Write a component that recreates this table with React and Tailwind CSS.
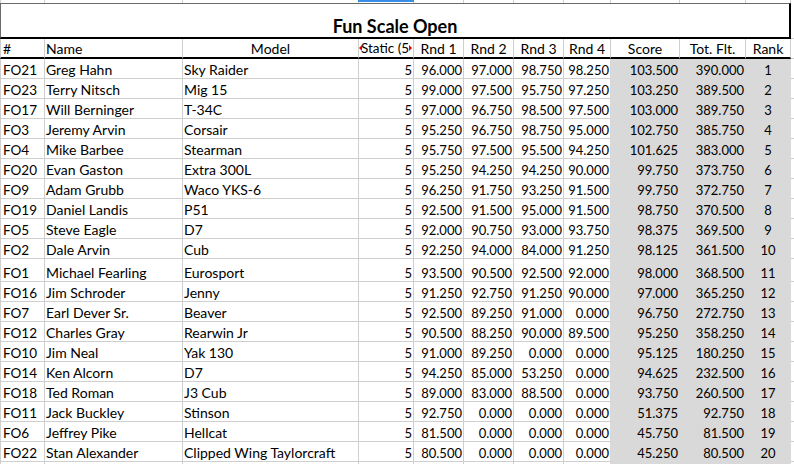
import React from "react";

const rows = [
  ["FO21", "Greg Hahn", "Sky Raider", "96.000", "97.000", "98.750", "98.250", "103.500", "390.000", "1"],
  ["FO23", "Terry Nitsch", "Mig 15", "99.000", "97.500", "95.750", "97.250", "103.250", "389.500", "2"],
  ["FO17", "Will Berninger", "T-34C", "97.000", "96.750", "98.500", "97.500", "103.000", "389.750", "3"],
  ["FO3", "Jeremy Arvin", "Corsair", "95.250", "96.750", "98.750", "95.000", "102.750", "385.750", "4"],
  ["FO4", "Mike Barbee", "Stearman", "95.750", "97.500", "95.500", "94.250", "101.625", "383.000", "5"],
  ["FO20", "Evan Gaston", "Extra 300L", "95.250", "94.250", "94.250", "90.000", "99.750", "373.750", "6"],
  ["FO9", "Adam Grubb", "Waco YKS-6", "96.250", "91.750", "93.250", "91.500", "99.750", "372.750", "7"],
  ["FO19", "Daniel Landis", "P51", "92.500", "91.500", "95.000", "91.500", "98.750", "370.500", "8"],
  ["FO5", "Steve Eagle", "D7", "92.000", "90.750", "93.000", "93.750", "98.375", "369.500", "9"],
  ["FO2", "Dale Arvin", "Cub", "92.250", "94.000", "84.000", "91.250", "98.125", "361.500", "10"],
  ["FO1", "Michael Fearling", "Eurosport", "93.500", "90.500", "92.500", "92.000", "98.000", "368.500", "11"],
  ["FO16", "Jim Schroder", "Jenny", "91.250", "92.750", "91.250", "90.000", "97.000", "365.250", "12"],
  ["FO7", "Earl Dever Sr.", "Beaver", "92.500", "89.250", "91.000", "0.000", "96.750", "272.750", "13"],
  ["FO12", "Charles Gray", "Rearwin Jr", "90.500", "88.250", "90.000", "89.500", "95.250", "358.250", "14"],
  ["FO10", "Jim Neal", "Yak 130", "91.000", "89.250", "0.000", "0.000", "95.125", "180.250", "15"],
  ["FO14", "Ken Alcorn", "D7", "94.250", "85.000", "53.250", "0.000", "94.625", "232.500", "16"],
  ["FO18", "Ted Roman", "J3 Cub", "89.000", "83.000", "88.500", "0.000", "93.750", "260.500", "17"],
  ["FO11", "Jack Buckley", "Stinson", "92.750", "0.000", "0.000", "0.000", "51.375", "92.750", "18"],
  ["FO6", "Jeffrey Pike", "Hellcat", "81.500", "0.000", "0.000", "0.000", "45.750", "81.500", "19"],
  ["FO22", "Stan Alexander", "Clipped Wing Taylorcraft", "80.500", "0.000", "0.000", "0.000", "45.250", "80.500", "20"],
];

const COLS = "grid grid-cols-[45px_138px_176px_55px_50px_50px_50px_47px_69px_66px_45px_1fr]";
const FONT = { fontFamily: 'Lato, "Liberation Sans", sans-serif' };

function DataRow({ r, tall }) {
  const h = tall ? "h-[23px]" : "h-[20px]";
  const cell = `${h} flex items-end border-b border-r border-[#cfcfcf] whitespace-nowrap overflow-hidden leading-[16px]`;
  const gray = `${h} flex items-end bg-[#d9d9d9] border-b border-r border-[#d9d9d9] whitespace-nowrap leading-[16px] text-[13px]`;
  return (
    <div className={`${COLS} text-[14px] text-black`}>
      <div className={`${cell} border-l pl-[2px] text-[13.5px]`}>{r[0]}</div>
      <div className={`${cell} pl-[1px]`}>{r[1]}</div>
      <div className={`${cell} pl-[1px]`}>{r[2]}</div>
      <div className={`${cell} justify-end pr-[1px] text-[13px]`}>5</div>
      <div className={`${cell} justify-end pr-[1px] text-[13px]`}>{r[3]}</div>
      <div className={`${cell} justify-end pr-[1px] text-[13px]`}>{r[4]}</div>
      <div className={`${cell} justify-end pr-[1px] text-[13px]`}>{r[5]}</div>
      <div className={`${cell} justify-end pr-[1px] text-[13px] border-r-[#d9d9d9]`}>{r[6]}</div>
      <div className={`${gray} justify-end pr-[1px]`}>{r[7]}</div>
      <div className={`${gray} justify-end pr-[1px]`}>{r[8]}</div>
      <div className={`${gray} justify-center`}>{r[9]}</div>
      <div className={`${h} border-b border-[#cfcfcf]`} />
    </div>
  );
}

export default function App() {
  const hcell =
    "h-[20px] flex items-end border-b-2 border-b-black border-r border-r-[#cfcfcf] whitespace-nowrap overflow-hidden leading-[17px]";
  return (
    <div className="w-[794px] h-[464px] overflow-hidden bg-white text-black" style={FONT}>
      {/* partial row above */}
      <div className={COLS}>
        {Array.from({ length: 11 }).map((_, i) => (
          <div
            key={i}
            className={`h-[3px] border-r border-[#cfcfcf] ${i === 0 ? "border-l" : ""} ${
              i === 3 ? "relative" : ""
            }`}
          >
            {i === 3 && <div className="absolute left-[-1px] right-[-1px] top-0 h-[2px] bg-[#3a8ee6]" />}
          </div>
        ))}
        <div className="h-[3px]" />
      </div>

      {/* title row */}
      <div className={COLS}>
        <div className="col-span-11 h-[36px] border-t border-l border-t-[#6b6b6b] border-l-[#6b6b6b] border-r-2 border-r-black border-b-2 border-b-black flex items-end justify-center">
          <span className="text-[18px] font-bold leading-[22px]">Fun Scale Open</span>
        </div>
        <div className="h-[36px] border-b border-[#cfcfcf]" />
      </div>

      {/* header row */}
      <div className={`${COLS} text-[14px]`}>
        <div className={`${hcell} border-l border-l-[#cfcfcf] pl-[2px]`}>#</div>
        <div className={`${hcell} pl-[1px]`}>Name</div>
        <div className={`${hcell} justify-center`}>Model</div>
        <div className={`${hcell} relative pl-[2px] text-[13.5px]`}>
          <span>Static (5</span>
          <span className="absolute left-0 top-[6px] w-0 h-0 border-y-[3px] border-y-transparent border-r-[3px] border-r-[#e00000]" />
          <span className="absolute right-[1px] top-[6px] w-0 h-0 border-y-[3px] border-y-transparent border-l-[3px] border-l-[#e00000]" />
        </div>
        <div className={`${hcell} justify-center`}>Rnd 1</div>
        <div className={`${hcell} justify-center`}>Rnd 2</div>
        <div className={`${hcell} justify-center`}>Rnd 3</div>
        <div className={`${hcell} justify-center`}>Rnd 4</div>
        <div className={`${hcell} justify-center`}>Score</div>
        <div className={`${hcell} justify-center`}>Tot. Flt.</div>
        <div className={`${hcell} justify-center`}>Rank</div>
        <div className="h-[20px] border-b border-[#cfcfcf]" />
      </div>

      {rows.map((r, i) => (
        <DataRow key={r[0]} r={r} tall={i === 10} />
      ))}

      <div className={COLS}>
        {Array.from({ length: 11 }).map((_, i) => (
          <div
            key={i}
            className={`h-[4px] border-r border-[#cfcfcf] ${i === 0 ? "border-l" : ""} ${
              i >= 8 ? "bg-[#d9d9d9] border-[#d9d9d9]" : ""
            } ${i === 7 ? "border-r-[#d9d9d9]" : ""}`}
          />
        ))}
        <div className="h-[4px]" />
      </div>
    </div>
  );
}
